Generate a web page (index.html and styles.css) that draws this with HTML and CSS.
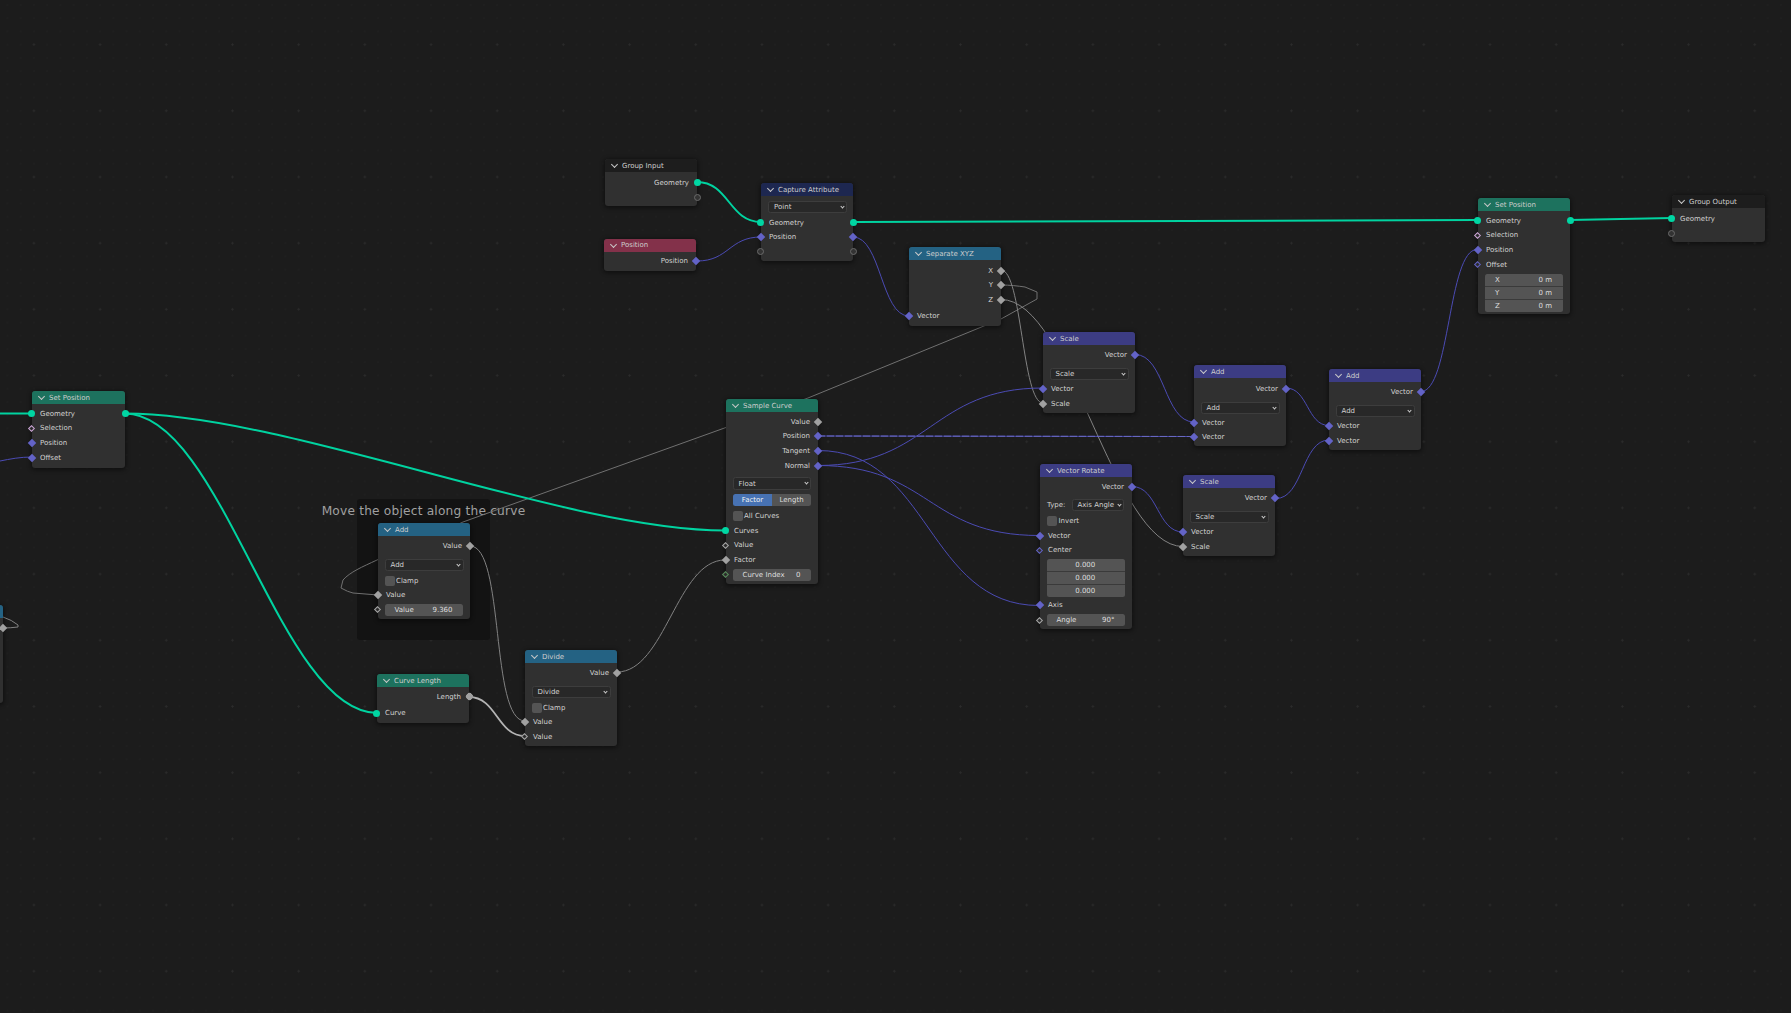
FILE: index.html
```html
<!DOCTYPE html>
<html lang="en">
<head>
<meta charset="utf-8">
<title>Geometry Nodes</title>
<link rel="stylesheet" href="styles.css">
</head>
<body>
<main class="canvas">
  <section class="frame"><span class="frame-label">Move the object along the curve</span></section>

  <svg class="wires" width="1791" height="1013" viewBox="0 0 1791 1013" fill="none">
    <path class="w-val-dim" d="M1001 285C1010 285 1018 286 1025 287L1037 292L1037 299L1001 319L808 398L463 522L377 560C362 567 350 572 343 580L341 588Q348 592 353 593L378 595"/>
    <g class="w-val">
      <path d="M1001 270C1022 270 1022 403 1043 403"/>
      <path d="M1001 299.5C1071 299.5 1113 546.5 1183 546.5"/>
      <path d="M470 546C505 546 490 721 525 721"/>
      <path d="M617 672C665 672 677 560 725 560"/>
      <path d="M3 617Q12 620 18 625L18 627Q10 628 3 628"/>
    </g>
    <path class="w-val-thick" d="M469 697C497 697 497 736 525 736"/>
    <g class="w-vec">
      <path d="M697 261C729 261 729 237 761 237"/>
      <path d="M853 237C881 237 881 316 909 316"/>
      <path d="M818 465.5C930 465.5 931 388 1043 388"/>
      <path d="M818 465.5C930 465.5 927 535.5 1039 535.5"/>
      <path d="M818 450.5C930 450.5 927 605.5 1039 605.5"/>
      <path d="M818 436L1194 436.5"/>
      <path d="M1135 354.5C1165 354.5 1164 422 1194 422"/>
      <path d="M1286 388C1308 388 1307 425.5 1329 425.5"/>
      <path d="M1276 498.5C1303 498.5 1302 440 1329 440"/>
      <path d="M1132 486.5C1158 486.5 1157 532 1183 532"/>
      <path d="M1421 391.5C1450 391.5 1448 249.5 1477 249.5"/>
      <path d="M0 461C10 459 20 457 32 457"/>
    </g>
    <path class="w-vec-dash" d="M818 436L1194 436.5"/>
    <g class="w-geo">
      <path d="M0 413.5L32 413.5"/>
      <path d="M697 182C729 182 729 222 761 222"/>
      <path d="M853 222L1477 220"/>
      <path d="M1570 220L1672 218"/>
      <path d="M125 413.5C285 413.5 565 530.5 725 530.5"/>
      <path d="M125 413.5C222 413.5 280 713 377 713"/>
    </g>
  </svg>

  <article class="node hd-dark group-input">
    <header class="head"><i class="chev"></i>Group Input</header>
    <div class="body body-io">
      <div class="row out"><i class="sk geo"></i>Geometry</div>
      <div class="row out"><i class="sk empty"></i></div>
    </div>
  </article>

  <article class="node hd-attr capture">
    <header class="head"><i class="chev"></i>Capture Attribute</header>
    <div class="body body-top">
      <div class="dd dd-capture">Point<i class="chev-sm"></i></div>
      <div class="row"><i class="sk geo"></i><i class="sk geo right"></i>Geometry</div>
      <div class="row"><i class="sk vec"></i><i class="sk vec right"></i>Position</div>
      <div class="row"><i class="sk empty"></i><i class="sk empty right"></i></div>
    </div>
  </article>

  <article class="node hd-input position">
    <header class="head"><i class="chev"></i>Position</header>
    <div class="body">
      <div class="row out"><i class="sk vec"></i>Position</div>
    </div>
  </article>

  <article class="node hd-conv separate">
    <header class="head"><i class="chev"></i>Separate XYZ</header>
    <div class="body body-io">
      <div class="row out"><i class="sk val"></i>X</div>
      <div class="row out"><i class="sk val"></i>Y</div>
      <div class="row out"><i class="sk val"></i>Z</div>
      <div class="row row-gap"><i class="sk vec"></i>Vector</div>
    </div>
  </article>

  <article class="node hd-geo sample">
    <header class="head"><i class="chev"></i>Sample Curve</header>
    <div class="body">
      <div class="row out"><i class="sk val"></i>Value</div>
      <div class="row out"><i class="sk vec"></i>Position</div>
      <div class="row out"><i class="sk vec"></i>Tangent</div>
      <div class="row out"><i class="sk vec"></i>Normal</div>
      <div class="dd dd-float">Float<i class="chev-sm"></i></div>
      <div class="seg"><span class="seg-item active">Factor</span><span class="seg-item">Length</span></div>
      <label class="check"><i class="box"></i>All Curves</label>
      <div class="row"><i class="sk geo"></i>Curves</div>
      <div class="row"><i class="sk val hollow"></i>Value</div>
      <div class="row"><i class="sk val"></i>Factor</div>
      <div class="field-row"><i class="sk int hollow"></i><div class="field"><span>Curve Index</span><span>0</span></div></div>
    </div>
  </article>

  <article class="node hd-vec scale-a">
    <header class="head"><i class="chev"></i>Scale</header>
    <div class="body">
      <div class="row out"><i class="sk vec"></i>Vector</div>
      <div class="dd dd-op">Scale<i class="chev-sm"></i></div>
      <div class="row"><i class="sk vec"></i>Vector</div>
      <div class="row"><i class="sk val"></i>Scale</div>
    </div>
  </article>

  <article class="node hd-vec add-a">
    <header class="head"><i class="chev"></i>Add</header>
    <div class="body body-io">
      <div class="row out"><i class="sk vec"></i>Vector</div>
      <div class="dd dd-op">Add<i class="chev-sm"></i></div>
      <div class="row"><i class="sk vec"></i>Vector</div>
      <div class="row"><i class="sk vec"></i>Vector</div>
    </div>
  </article>

  <article class="node hd-vec add-b">
    <header class="head"><i class="chev"></i>Add</header>
    <div class="body">
      <div class="row out"><i class="sk vec"></i>Vector</div>
      <div class="dd dd-op">Add<i class="chev-sm"></i></div>
      <div class="row"><i class="sk vec"></i>Vector</div>
      <div class="row"><i class="sk vec"></i>Vector</div>
    </div>
  </article>

  <article class="node hd-vec scale-b">
    <header class="head"><i class="chev"></i>Scale</header>
    <div class="body">
      <div class="row out"><i class="sk vec"></i>Vector</div>
      <div class="dd dd-op">Scale<i class="chev-sm"></i></div>
      <div class="row"><i class="sk vec"></i>Vector</div>
      <div class="row"><i class="sk val"></i>Scale</div>
    </div>
  </article>

  <article class="node hd-vec rotate">
    <header class="head"><i class="chev"></i>Vector Rotate</header>
    <div class="body">
      <div class="row out"><i class="sk vec"></i>Vector</div>
      <div class="type-row"><span>Type:</span><div class="dd dd-type">Axis Angle<i class="chev-sm"></i></div></div>
      <label class="check check-rotate"><i class="box"></i>Invert</label>
      <div class="row"><i class="sk vec"></i>Vector</div>
      <div class="row"><i class="sk vec hollow"></i>Center</div>
      <div class="fields fields-num">
        <div class="field center"><span>0.000</span></div>
        <div class="field center"><span>0.000</span></div>
        <div class="field center"><span>0.000</span></div>
      </div>
      <div class="row"><i class="sk vec"></i>Axis</div>
      <div class="field-row field-row-angle"><i class="sk val hollow"></i><div class="field"><span>Angle</span><span>90°</span></div></div>
    </div>
  </article>

  <article class="node hd-geo setpos-r">
    <header class="head"><i class="chev"></i>Set Position</header>
    <div class="body">
      <div class="row"><i class="sk geo"></i><i class="sk geo right"></i>Geometry</div>
      <div class="row"><i class="sk bool hollow"></i>Selection</div>
      <div class="row"><i class="sk vec"></i>Position</div>
      <div class="row"><i class="sk vec hollow"></i>Offset</div>
      <div class="fields fields-xyz">
        <div class="field"><span>X</span><span>0 m</span></div>
        <div class="field"><span>Y</span><span>0 m</span></div>
        <div class="field"><span>Z</span><span>0 m</span></div>
      </div>
    </div>
  </article>

  <article class="node hd-dark group-output">
    <header class="head"><i class="chev"></i>Group Output</header>
    <div class="body body-io">
      <div class="row"><i class="sk geo"></i>Geometry</div>
      <div class="row"><i class="sk empty"></i></div>
    </div>
  </article>

  <article class="node hd-geo setpos-l">
    <header class="head"><i class="chev"></i>Set Position</header>
    <div class="body">
      <div class="row"><i class="sk geo"></i><i class="sk geo right"></i>Geometry</div>
      <div class="row"><i class="sk bool hollow"></i>Selection</div>
      <div class="row"><i class="sk vec"></i>Position</div>
      <div class="row"><i class="sk vec"></i>Offset</div>
    </div>
  </article>

  <article class="node hd-conv math-add">
    <header class="head"><i class="chev"></i>Add</header>
    <div class="body">
      <div class="row out"><i class="sk val"></i>Value</div>
      <div class="dd dd-op">Add<i class="chev-sm"></i></div>
      <label class="check check-math"><i class="box"></i>Clamp</label>
      <div class="row"><i class="sk val"></i>Value</div>
      <div class="field-row"><i class="sk val hollow"></i><div class="field"><span>Value</span><span>9.360</span></div></div>
    </div>
  </article>

  <article class="node hd-geo curve-length">
    <header class="head"><i class="chev"></i>Curve Length</header>
    <div class="body">
      <div class="row out"><i class="sk val round"></i>Length</div>
      <div class="row row-gap"><i class="sk geo"></i>Curve</div>
    </div>
  </article>

  <article class="node hd-conv divide">
    <header class="head"><i class="chev"></i>Divide</header>
    <div class="body">
      <div class="row out"><i class="sk val"></i>Value</div>
      <div class="dd dd-op">Divide<i class="chev-sm"></i></div>
      <label class="check check-math"><i class="box"></i>Clamp</label>
      <div class="row"><i class="sk val"></i>Value</div>
      <div class="row"><i class="sk val hollow"></i>Value</div>
    </div>
  </article>

  <article class="node hd-conv math-off">
    <header class="head"></header>
    <div class="body">
      <div class="row out"><i class="sk val"></i></div>
    </div>
  </article>
</main>
</body>
</html>
```
FILE: styles.css
```css
* { box-sizing: border-box; }
html, body { margin: 0; height: 100%; overflow: hidden; background: #1c1c1c; }

.canvas {
  position: relative;
  width: 1791px;
  height: 1013px;
  overflow: hidden;
  background-color: #1c1c1c;
  background-image:
    radial-gradient(circle, #2b2b2b 0.9px, transparent 1.2px),
    radial-gradient(circle, #202020 0.6px, transparent 0.9px);
  background-size: 66.2px 66.2px, 13.24px 13.24px;
  background-position: 0.8px 11.5px, 0.8px 11.5px;
  font-family: "DejaVu Sans", sans-serif;
  font-size: 7px;
  color: #d2d2d2;
}

/* frame */
.frame {
  position: absolute;
  left: 357px; top: 499px;
  width: 133px; height: 141px;
  background: #131313;
  border-radius: 3px;
  display: flex;
  justify-content: center;
}
.frame-label {
  flex: none;
  margin-top: 4px;
  font-size: 12.2px;
  line-height: 16px;
  letter-spacing: 0.2px;
  color: #a0a0a0;
  white-space: nowrap;
}

/* wires */
.wires { position: absolute; left: 0; top: 0; }
.w-val path { stroke: #828282; stroke-width: 1; }
.w-val-dim { stroke: #707070; stroke-width: 1; }
.w-val-thick { stroke: #b4b4b4; stroke-width: 1.8; }
.w-vec path { stroke: #4b4bb4; stroke-width: 1; }
.w-vec-dash { stroke: #6a6ac0; stroke-width: 1; stroke-dasharray: 7 2; }
.w-geo path { stroke: #00d3a0; stroke-width: 2; }

/* node */
.node {
  position: absolute;
  width: 92px;
  background: #303030;
  border-radius: 3px;
  box-shadow: 0 1px 4px 1px rgba(0, 0, 0, 0.45);
}
.head {
  display: flex;
  align-items: center;
  height: 13.4px;
  padding-left: 7px;
  border-radius: 3px 3px 0 0;
  color: #cdcdcd;
  white-space: nowrap;
}
.chev {
  flex: none;
  width: 5px; height: 5px;
  margin: -2px 5px 0 0;
  border-right: 1px solid #c8c8c8;
  border-bottom: 1px solid #c8c8c8;
  transform: rotate(45deg);
}
.hd-dark .head { background: #1d1d1d; }
.hd-attr .head { background: #1d2750; }
.hd-input .head { background: #83314a; }
.hd-conv .head { background: #246283; }
.hd-geo .head { background: #1d725e; }
.hd-vec .head { background: #3c3c83; }

.body { padding: 2px 0 2.5px; }
.body-io { padding-top: 2.8px; padding-bottom: 1.7px; }
.body-top { padding-top: 4.8px; padding-bottom: 1.7px; }

.row {
  position: relative;
  display: flex;
  align-items: center;
  height: 14.67px;
  padding: 0 8px;
  white-space: nowrap;
}
.row.out { justify-content: flex-end; }
.row-gap { margin-top: 2px; }

/* sockets */
.sk {
  position: absolute;
  left: -3.5px; top: 50%;
  width: 6px; height: 6px;
  margin-top: -3px;
  transform: rotate(45deg);
  border: 1px solid transparent;
}
.out .sk, .sk.right { left: auto; right: -3px; }
.sk.geo { width: 7px; height: 7px; margin-top: -3.5px; left: -4px; border-radius: 50%; background: #00d6a3; transform: none; }
.out .sk.geo, .sk.geo.right { left: auto; right: -3.5px; }
.sk.empty { width: 7px; height: 7px; margin-top: -3.5px; left: -4px; border-radius: 50%; border-color: #6a6a6a; background: #333; transform: none; }
.out .sk.empty, .sk.empty.right { left: auto; right: -3.5px; }
.sk.vec { background: #6363c7; }
.sk.val { background: #a1a1a1; }
.out .sk.round { width: 7px; height: 7px; margin-top: -3.5px; right: -4px; border-radius: 50%; }
.sk.hollow { width: 5px; height: 5px; margin-top: -2.5px; left: -3px; }
.sk.vec.hollow { background: #2c2c2c; border-color: #6363c7; }
.sk.val.hollow { background: #2c2c2c; border-color: #a8a8a8; }
.sk.int.hollow { background: #2c2c2c; border-color: #598c5c; }
.sk.bool.hollow { background: #2c2c2c; border-color: #cca6d6; }

/* dropdowns */
.dd {
  position: relative;
  display: flex;
  align-items: center;
  height: 12px;
  padding-left: 5px;
  background: #282828;
  border: 1px solid #3d3d3d;
  border-radius: 2.5px;
  white-space: nowrap;
}
.chev-sm {
  position: absolute;
  right: 2.5px; top: 3px;
  width: 3px; height: 3px;
  border-right: 1px solid #cfcfcf;
  border-bottom: 1px solid #cfcfcf;
  transform: rotate(45deg);
}
.dd-capture { margin: 0 6px 2px 7px; }
.dd-op { margin: 6px 6.5px 1.5px 6.5px; }
.dd-float { margin: 4px 7px 0 6.5px; height: 13px; }

.type-row {
  display: flex;
  align-items: center;
  margin: 5px 7.5px 0 7px;
  gap: 7px;
}
.dd-type { flex: none; width: 52px; padding-left: 4px; }

/* segmented control */
.seg {
  display: flex;
  height: 12px;
  margin: 4px 7px 0 7px;
  border-radius: 2.5px;
  overflow: hidden;
}
.seg-item {
  flex: 1;
  display: flex;
  align-items: center;
  justify-content: center;
  background: #545454;
  color: #dedede;
}
.seg-item.active { background: #4772b3; color: #f2f2f2; }

/* checkboxes */
.check {
  display: flex;
  align-items: center;
  gap: 1.5px;
  height: 14.2px;
  margin: 3px 7px 0 6.5px;
}
.box {
  flex: none;
  width: 10px; height: 10px;
  background: #545454;
  border-radius: 2px;
}
.check-rotate { margin-left: 7px; margin-top: 2.5px; height: 14.7px; }
.check-math { height: 14px; margin-top: 2.5px; }

/* fields */
.field {
  display: flex;
  align-items: center;
  justify-content: space-between;
  flex: 1;
  height: 12.4px;
  padding: 0 10.5px 0 10px;
  background: #545454;
  color: #dedede;
  white-space: nowrap;
}
.field.center { justify-content: center; }
.field-row {
  position: relative;
  display: flex;
  margin: 1.5px 7px 0 6.5px;
}
.field-row .field { border-radius: 2.5px; }
.field-row .sk { left: -9.5px; }
.field-row-angle { margin-top: 1.7px; }

.fields {
  display: flex;
  flex-direction: column;
  gap: 1px;
  border-radius: 2.5px;
  background: #3a3a3a;
  overflow: hidden;
}
.fields .field { flex: none; height: 12px; }
.fields-num { margin: 1px 7.5px 1px 6.5px; }
.fields-xyz { margin: 1.5px 7.5px 0 7px; }

/* placement on the node canvas */
.group-input { left: 605px; top: 159px; }
.capture { left: 761px; top: 183px; }
.position { left: 604px; top: 238.5px; }
.separate { left: 909px; top: 247px; }
.sample { left: 726px; top: 399px; }
.scale-a { left: 1043px; top: 332px; }
.add-a { left: 1194px; top: 365px; }
.add-b { left: 1329px; top: 369px; }
.scale-b { left: 1183px; top: 475px; }
.rotate { left: 1040px; top: 464px; }
.setpos-r { left: 1478px; top: 198px; }
.group-output { left: 1672px; top: 195px; width: 93px; }
.setpos-l { left: 32px; top: 391px; width: 93px; }
.math-add { left: 378px; top: 523px; }
.curve-length { left: 377px; top: 674px; }
.divide { left: 525px; top: 650px; }
.math-off { left: -89px; top: 605px; height: 98px; }
```
